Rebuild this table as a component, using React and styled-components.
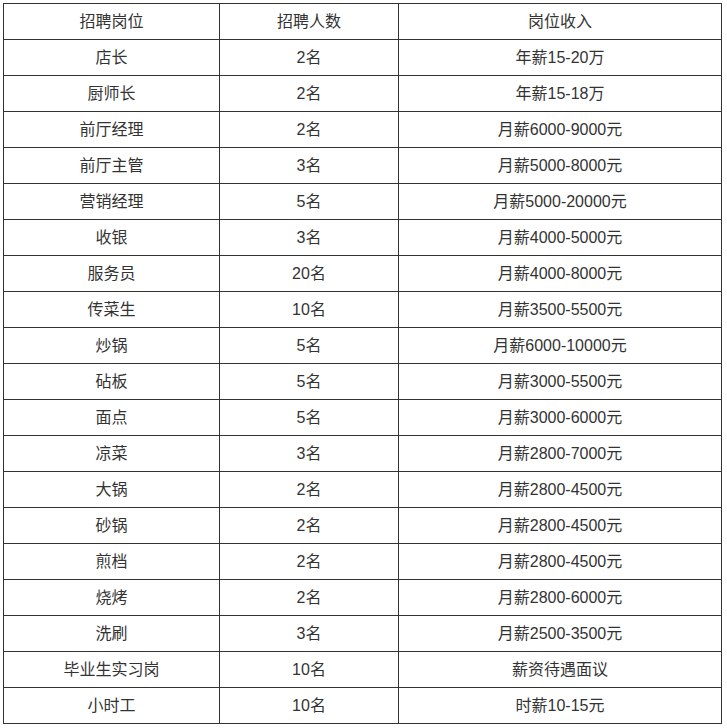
import React from "react";
import styled, { createGlobalStyle } from "styled-components";

const Global = createGlobalStyle`
  html, body { margin: 0; padding: 0; background: #fff; }
  body { font-family: "Liberation Sans", "Noto Sans CJK SC", sans-serif; }
`;

const Wrap = styled.div`
  padding: 3px;
`;

const Table = styled.table`
  border-collapse: collapse;
  table-layout: fixed;
  width: 718px;
  color: #333;
  font-size: 16px;
`;

const Cell = styled.td`
  border: 1px solid #333;
  height: 35px;
  padding: 0;
  text-align: center;
  vertical-align: middle;
  line-height: 20px;
`;

const HeadCell = styled(Cell)``;

const rows = [
  ["店长", "2名", "年薪15-20万"],
  ["厨师长", "2名", "年薪15-18万"],
  ["前厅经理", "2名", "月薪6000-9000元"],
  ["前厅主管", "3名", "月薪5000-8000元"],
  ["营销经理", "5名", "月薪5000-20000元"],
  ["收银", "3名", "月薪4000-5000元"],
  ["服务员", "20名", "月薪4000-8000元"],
  ["传菜生", "10名", "月薪3500-5500元"],
  ["炒锅", "5名", "月薪6000-10000元"],
  ["砧板", "5名", "月薪3000-5500元"],
  ["面点", "5名", "月薪3000-6000元"],
  ["凉菜", "3名", "月薪2800-7000元"],
  ["大锅", "2名", "月薪2800-4500元"],
  ["砂锅", "2名", "月薪2800-4500元"],
  ["煎档", "2名", "月薪2800-4500元"],
  ["烧烤", "2名", "月薪2800-6000元"],
  ["洗刷", "3名", "月薪2500-3500元"],
  ["毕业生实习岗", "10名", "薪资待遇面议"],
  ["小时工", "10名", "时薪10-15元"],
];

export default function App() {
  return (
    <>
      <Global />
      <Wrap>
        <Table>
          <colgroup>
            <col style={{ width: 216 }} />
            <col style={{ width: 179 }} />
            <col style={{ width: 323 }} />
          </colgroup>
          <tbody>
            <tr>
              <HeadCell>招聘岗位</HeadCell>
              <HeadCell>招聘人数</HeadCell>
              <HeadCell>岗位收入</HeadCell>
            </tr>
            {rows.map((r, i) => (
              <tr key={i}>
                {r.map((c, j) => (
                  <Cell key={j}>{c}</Cell>
                ))}
              </tr>
            ))}
          </tbody>
        </Table>
      </Wrap>
    </>
  );
}
